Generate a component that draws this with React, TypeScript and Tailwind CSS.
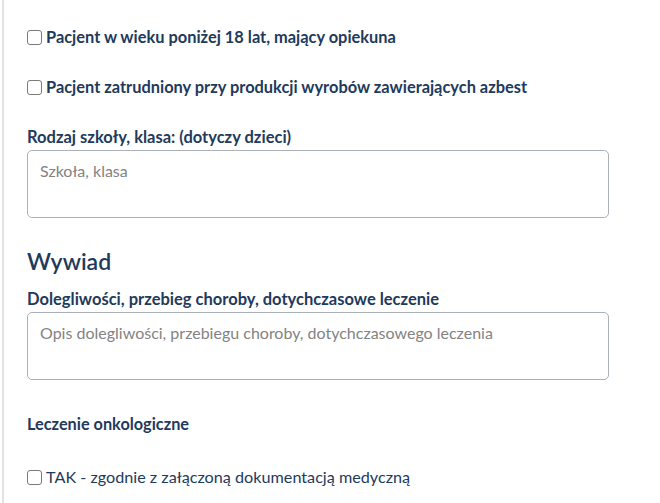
import React from "react";

const font = { fontFamily: "Lato, 'Open Sans', sans-serif" };

const CheckRow = ({ label, bold }: { label: string; bold?: boolean }) => (
  <label className="flex items-center gap-[4px] h-[22px]">
    <input
      type="checkbox"
      className="appearance-none w-[15px] h-[15px] shrink-0 border border-[#7a7a7a] rounded-[3px] bg-white"
    />
    <span className={`text-[#1e3a5c] ${bold ? "text-[16.4px] font-bold" : "text-[16.2px] font-normal"}`}>{label}</span>
  </label>
);

const Field = ({ label, placeholder }: { label: string; placeholder: string }) => (
  <div className="flex flex-col">
    <div className="text-[16.5px] font-bold text-[#1e3a5c] leading-[22px]">{label}</div>
    <textarea
      placeholder={placeholder}
      className="mt-[2px] w-[582px] h-[68px] resize-none border border-[#aab1b8] rounded-[5px] px-[12px] py-[8px] text-[16px] font-normal text-[#333] placeholder:text-[#838383] outline-none"
      style={font}
    />
  </div>
);

export default function App() {
  return (
    <div className="bg-white w-[660px] h-[503px] overflow-hidden pl-[2px]" style={font}>
      <div className="h-full border-l-2 border-[#e2e2e2] pl-[23px] pt-[26px] flex flex-col">
        <CheckRow label="Pacjent w wieku poniżej 18 lat, mający opiekuna" bold />
        <div className="mt-[28px]">
          <CheckRow label="Pacjent zatrudniony przy produkcji wyrobów zawierających azbest" bold />
        </div>
        <div className="mt-[28px]">
          <Field label="Rodzaj szkoły, klasa: (dotyczy dzieci)" placeholder="Szkoła, klasa" />
        </div>
        <h2 className="mt-[28px] text-[23px] font-semibold text-[#1e3a5c] leading-[30px]">Wywiad</h2>
        <div className="mt-[12px]">
          <Field
            label="Dolegliwości, przebieg choroby, dotychczasowe leczenie"
            placeholder="Opis dolegliwości, przebiegu choroby, dotychczasowego leczenia"
          />
        </div>
        <div className="mt-[33px] text-[16.3px] font-bold text-[#1e3a5c] leading-[22px]">Leczenie onkologiczne</div>
        <div className="mt-[31px]">
          <CheckRow label="TAK - zgodnie z załączoną dokumentacją medyczną" />
        </div>
      </div>
    </div>
  );
}
